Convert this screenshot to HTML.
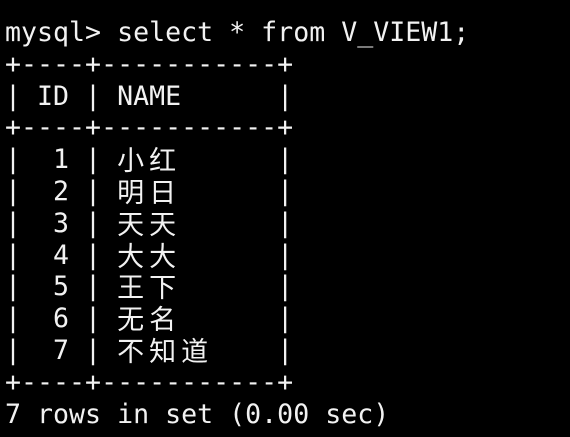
<!DOCTYPE html>
<html><head><meta charset="utf-8"><style>
html,body{margin:0;padding:0;background:#000;width:570px;height:437px;overflow:hidden}
pre{margin:0;position:absolute;left:5px;top:17px;color:#f2f2f2;font-family:"DejaVu Sans Mono","Liberation Mono",monospace;font-size:26.6px;line-height:31.8px;white-space:pre}
.c{display:inline-block;width:32px;height:20px;line-height:20px;vertical-align:baseline;position:relative;top:2px;font-family:"Noto Sans CJK SC",sans-serif;font-size:27px;text-align:left;overflow:visible}
</style></head><body><pre>mysql&gt; select * from V_VIEW1;
+----+-----------+
| ID | NAME      |
+----+-----------+
|  1 | <span class="c">小</span><span class="c">红</span>      |
|  2 | <span class="c">明</span><span class="c">日</span>      |
|  3 | <span class="c">天</span><span class="c">天</span>      |
|  4 | <span class="c">大</span><span class="c">大</span>      |
|  5 | <span class="c">王</span><span class="c">下</span>      |
|  6 | <span class="c">无</span><span class="c">名</span>      |
|  7 | <span class="c">不</span><span class="c">知</span><span class="c">道</span>    |
+----+-----------+
7 rows in set (0.00 sec)</pre></body></html>
